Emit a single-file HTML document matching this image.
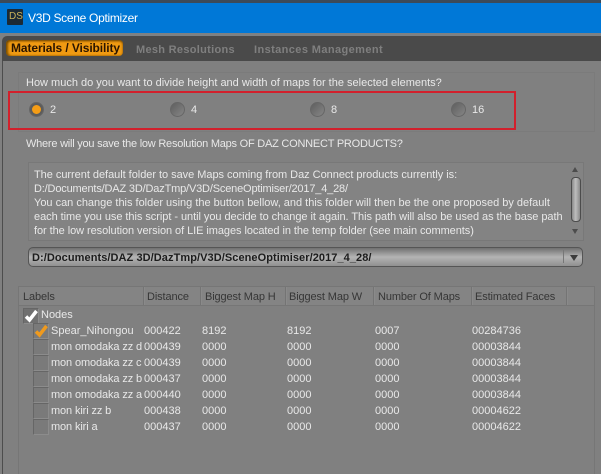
<!DOCTYPE html>
<html><head><meta charset="utf-8"><style>
html,body{margin:0;padding:0;background:#808080}
#p{position:relative;width:601px;height:474px;overflow:hidden;background:#808080;font-family:"Liberation Sans",sans-serif;font-size:11px;color:#e8e8e8}
#p div{position:absolute;white-space:pre}
.t{line-height:14px;height:14px;margin-top:1px}
.l{letter-spacing:-.12px}
.h{color:#363636;letter-spacing:-.12px;line-height:14px;margin-top:1px}
.r{width:13px;height:13px;border-radius:50%;background:linear-gradient(135deg,#5e5e5e,#767676 60%,#868686);border:1px solid #666}
.c{width:14px;height:14px;left:33px;background:#7a7a7a;border:1px solid #6e6e6e;border-top-color:#666;border-left-color:#666;border-bottom-color:#8c8c8c;border-right-color:#8c8c8c}
.s{width:1px;top:287px;height:18px;background:#747474;border-right:1px solid #8a8a8a}
</style></head><body><div id="p">
<div style="left:0;top:0;width:601px;height:3px;background:#3c4a58"></div>
<div style="left:0;top:3px;width:601px;height:30px;background:#0078d7"></div>
<div style="left:7px;top:9px;width:16px;height:16px;background:#1c2a35;border-radius:1px"></div>
<div style="left:9px;top:11px;font-size:10px;line-height:12px;color:#c9b35a">DS</div>
<div style="left:28px;top:10px;font-size:12px;line-height:16px;color:#fff;letter-spacing:-.3px">V3D Scene Optimizer</div>

<div style="left:0;top:33px;width:601px;height:3px;background:#7d8184"></div>
<div style="left:2px;top:36px;width:599px;height:25px;background:#4a4a4a;border-radius:5px 0 0 0"></div>
<div style="left:2px;top:61px;width:1px;height:413px;background:#4d4d4d"></div>
<div style="left:6px;top:40px;width:117px;height:16px;background:#f09a12;border-radius:4px;box-shadow:inset 0 1px 2px #6b4300,inset 2px 0 2px #8a5800"></div>
<div style="left:11px;top:41px;font-size:12px;font-weight:bold;line-height:14px;color:#2a1500;letter-spacing:-.1px">Materials / Visibility</div>
<div style="left:136px;top:43px;font-size:11px;font-weight:bold;line-height:14px;color:#7f7f7f;letter-spacing:.3px">Mesh Resolutions</div>
<div style="left:254px;top:43px;font-size:11px;font-weight:bold;line-height:14px;color:#7f7f7f;letter-spacing:.4px">Instances Management</div>

<div style="left:18px;top:72px;width:575px;height:58px;border:1px solid #7b7b7b"></div>
<div class="t" style="left:26px;top:75px">How much do you want to divide height and width of maps for the selected elements?</div>
<div style="left:8px;top:91px;width:504px;height:35px;border:2px solid #d2202c"></div>
<div class="r" style="left:29px;top:102px;background:#5c5c5c"></div>
<div style="left:32px;top:105px;width:9px;height:9px;border-radius:50%;background:#f59d16"></div>
<div class="r" style="left:170px;top:102px"></div>
<div class="r" style="left:310px;top:102px"></div>
<div class="r" style="left:451px;top:102px"></div>
<div class="t" style="left:50px;top:102px">2</div>
<div class="t" style="left:191px;top:102px">4</div>
<div class="t" style="left:331px;top:102px">8</div>
<div class="t" style="left:472px;top:102px">16</div>

<div class="t" style="left:26px;top:136px;letter-spacing:-.23px">Where will you save the low Resolution Maps OF DAZ CONNECT PRODUCTS?</div>
<div style="left:28px;top:162px;width:554px;height:77px;background:#838383;border:1px solid #787878"></div>
<div class="t" style="left:34px;top:167px;letter-spacing:-.035px">The current default folder to save Maps coming from Daz Connect products currently is:</div>
<div class="t" style="left:34px;top:181px;letter-spacing:-.17px">D:/Documents/DAZ 3D/DazTmp/V3D/SceneOptimiser/2017_4_28/</div>
<div class="t" style="left:34px;top:195px;letter-spacing:-.01px">You can change this folder using the button bellow, and this folder will then be the one proposed by default</div>
<div class="t" style="left:34px;top:209px;letter-spacing:-.05px">each time you use this script - until you decide to change it again. This path will also be used as the base path</div>
<div class="t" style="left:34px;top:223px;letter-spacing:-.065px">for the low resolution version of LIE images located in the temp folder (see main comments)</div>
<div style="left:572px;top:167px;width:0;height:0;border:3px solid transparent;border-top:0;border-bottom:5px solid #4c4c4c"></div>
<div style="left:571px;top:177px;width:8px;height:43px;border:1px solid #4c4c4c;border-radius:4px;background:linear-gradient(90deg,#8a8a8a,#bdbdbd 45%,#8a8a8a)"></div>
<div style="left:572px;top:229px;width:0;height:0;border:3px solid transparent;border-bottom:0;border-top:5px solid #4c4c4c"></div>

<div style="left:28px;top:247px;width:553px;height:18px;border:1px solid #555;border-radius:5px;background:linear-gradient(#707070,#b4b4b4 50%,#909090)"></div>
<div style="left:32px;top:251px;font-size:11px;font-weight:bold;line-height:14px;color:#1c1c1c;letter-spacing:.07px">D:/Documents/DAZ 3D/DazTmp/V3D/SceneOptimiser/2017_4_28/</div>
<div style="left:563px;top:250px;width:1px;height:13px;background:#777"></div>
<div style="left:570px;top:255px;width:0;height:0;border:4px solid transparent;border-bottom:0;border-top:6px solid #3c3c3c"></div>

<div style="left:18px;top:286px;width:575px;height:187px;border:1px solid #767676;border-bottom:0"></div>
<div style="left:19px;top:287px;width:575px;height:18px;background:#848484;border-bottom:1px solid #767676"></div>
<div class="s" style="left:143px"></div><div class="s" style="left:200px"></div><div class="s" style="left:285px"></div><div class="s" style="left:373px"></div><div class="s" style="left:471px"></div><div class="s" style="left:566px"></div>
<div class="h" style="left:23px;top:289px">Labels</div>
<div class="h" style="left:147px;top:289px">Distance</div>
<div class="h" style="left:205px;top:289px">Biggest Map H</div>
<div class="h" style="left:289px;top:289px">Biggest Map W</div>
<div class="h" style="left:378px;top:289px">Number Of Maps</div>
<div class="h" style="left:475px;top:289px">Estimated Faces</div>

<div class="c" style="left:23px;top:308px;background:#707070"></div>
<svg style="position:absolute;left:23px;top:308px" width="16" height="16"><path d="M3 8.5L6.500 12L13.500 3" fill="none" stroke="#fff" stroke-width="3.500"/></svg>
<div class="t" style="left:41px;top:307px">Nodes</div>
<div class="c" style="top:323px"></div>
<svg style="position:absolute;left:33px;top:323px" width="16" height="16"><path d="M3 8.500L6.500 12L13.500 3" fill="none" stroke="#ef9a1e" stroke-width="3.500"/></svg>
<div class="c" style="top:339px"></div><div class="c" style="top:355px"></div><div class="c" style="top:371px"></div><div class="c" style="top:387px"></div><div class="c" style="top:403px"></div><div class="c" style="top:419px"></div>

<div class="t" style="left:51px;top:323px">Spear_Nihongou</div><div class="t" style="left:144px;top:323px">000422</div><div class="t" style="left:202px;top:323px">8192</div><div class="t" style="left:287px;top:323px">8192</div><div class="t" style="left:375px;top:323px">0007</div><div class="t" style="left:472px;top:323px">00284736</div>
<div class="t l" style="left:51px;top:339px">mon omodaka zz d</div><div class="t" style="left:144px;top:339px">000439</div><div class="t" style="left:202px;top:339px">0000</div><div class="t" style="left:287px;top:339px">0000</div><div class="t" style="left:375px;top:339px">0000</div><div class="t" style="left:472px;top:339px">00003844</div>
<div class="t l" style="left:51px;top:355px">mon omodaka zz c</div><div class="t" style="left:144px;top:355px">000439</div><div class="t" style="left:202px;top:355px">0000</div><div class="t" style="left:287px;top:355px">0000</div><div class="t" style="left:375px;top:355px">0000</div><div class="t" style="left:472px;top:355px">00003844</div>
<div class="t l" style="left:51px;top:371px">mon omodaka zz b</div><div class="t" style="left:144px;top:371px">000437</div><div class="t" style="left:202px;top:371px">0000</div><div class="t" style="left:287px;top:371px">0000</div><div class="t" style="left:375px;top:371px">0000</div><div class="t" style="left:472px;top:371px">00003844</div>
<div class="t l" style="left:51px;top:387px">mon omodaka zz a</div><div class="t" style="left:144px;top:387px">000440</div><div class="t" style="left:202px;top:387px">0000</div><div class="t" style="left:287px;top:387px">0000</div><div class="t" style="left:375px;top:387px">0000</div><div class="t" style="left:472px;top:387px">00003844</div>
<div class="t l" style="left:51px;top:403px">mon kiri zz b</div><div class="t" style="left:144px;top:403px">000438</div><div class="t" style="left:202px;top:403px">0000</div><div class="t" style="left:287px;top:403px">0000</div><div class="t" style="left:375px;top:403px">0000</div><div class="t" style="left:472px;top:403px">00004622</div>
<div class="t l" style="left:51px;top:419px">mon kiri a</div><div class="t" style="left:144px;top:419px">000437</div><div class="t" style="left:202px;top:419px">0000</div><div class="t" style="left:287px;top:419px">0000</div><div class="t" style="left:375px;top:419px">0000</div><div class="t" style="left:472px;top:419px">00004622</div>
</div></body></html>
